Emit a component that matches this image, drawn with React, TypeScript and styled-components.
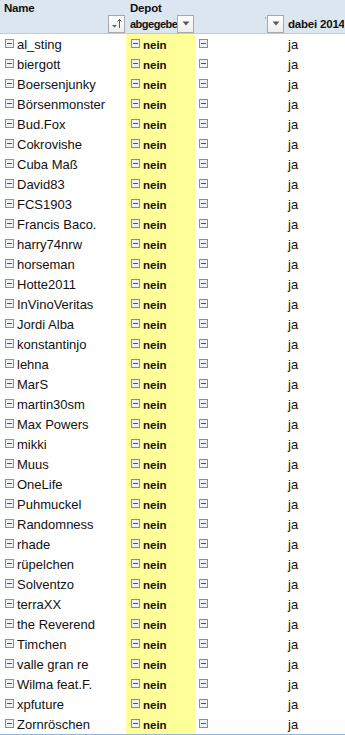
import React, { FC } from "react";
import styled, { createGlobalStyle } from "styled-components";

const names = [
  "al_sting",
  "biergott",
  "Boersenjunky",
  "Börsenmonster",
  "Bud.Fox",
  "Cokrovishe",
  "Cuba Maß",
  "David83",
  "FCS1903",
  "Francis Baco.",
  "harry74nrw",
  "horseman",
  "Hotte2011",
  "InVinoVeritas",
  "Jordi Alba",
  "konstantinjo",
  "lehna",
  "MarS",
  "martin30sm",
  "Max Powers",
  "mikki",
  "Muus",
  "OneLife",
  "Puhmuckel",
  "Randomness",
  "rhade",
  "rüpelchen",
  "Solventzo",
  "terraXX",
  "the Reverend",
  "Timchen",
  "valle gran re",
  "Wilma feat.F.",
  "xpfuture",
  "Zornröschen"
];

const colors = {
  header: "#dce6f1",
  headerLine: "#b8cce4",
  bottomLine: "#95b3d7",
  yellow: "#ffff99",
  text: "#111111",
  boxBorder: "#7f8ea3"
};

const GlobalStyle = createGlobalStyle`
  html, body {
    margin: 0;
    padding: 0;
    background: #ffffff;
    font-family: "Liberation Sans", Arial, sans-serif;
    font-size: 13px;
    color: ${colors.text};
  }
`;

const Sheet = styled.div`
  width: 345px;
  height: 735px;
  overflow: hidden;
`;

const HeaderRow = styled.div`
  display: grid;
  grid-template-columns: 126px 69px 90px 1fr;
  height: 33px;
  background: ${colors.header};
  border-bottom: 1px solid ${colors.headerLine};
  font-weight: bold;
  font-size: 11.5px;
  letter-spacing: -0.2px;
`;

const HeaderCell = styled.div<{ $padLeft?: number }>`
  display: grid;
  grid-template-rows: 15px 18px;
  padding-left: ${(p) => p.$padLeft ?? 4}px;
  padding-right: 1px;
  overflow: hidden;
  white-space: nowrap;
`;

const HeaderTitle = styled.div`
  line-height: 17px;
`;

const HeaderSub = styled.div`
  display: flex;
  align-items: center;
  justify-content: space-between;
  line-height: 16px;
  overflow: hidden;
`;

const SubText = styled.span<{ $tight?: boolean }>`
  flex: 1 1 auto;
  min-width: 0;
  overflow: hidden;
  font-size: ${(p) => (p.$tight ? "11px" : "inherit")};
  letter-spacing: ${(p) => (p.$tight ? "-0.5px" : "inherit")};
`;

const FilterButton = styled.div`
  flex: 0 0 auto;
  width: 15px;
  height: 16px;
  margin-top: -1px;
  border: 1px solid #a9a9a9;
  background: linear-gradient(#ffffff, #eeeeee);
  display: flex;
  align-items: center;
  justify-content: center;
`;

const Tick = styled.span`
  align-self: flex-start;
  margin-top: 2px;
  width: 1px;
  height: 2px;
  background: #c9a86b;
  margin-right: 1px;
`;

const Body = styled.div`
  border-bottom: 1px solid ${colors.bottomLine};
`;

const Row = styled.div`
  display: grid;
  grid-template-columns: 126px 69px 90px 1fr;
  height: 20px;
`;

const Cell = styled.div<{ $fill?: string; $padLeft?: number; $bold?: boolean }>`
  display: flex;
  align-items: center;
  gap: 2px;
  padding-left: ${(p) => p.$padLeft ?? 5}px;
  background: ${(p) => p.$fill ?? "transparent"};
  font-weight: ${(p) => (p.$bold ? "bold" : "normal")};
  font-size: ${(p) => (p.$bold ? "11.5px" : "13px")};
  white-space: nowrap;
  overflow: hidden;
`;

const Label = styled.span`
  line-height: 20px;
  padding-top: 1px;
`;

const MinusBox: FC = () => (
  <svg width="10" height="10" viewBox="0 0 10 10" style={{ flex: "0 0 auto" }}>
    <rect x="0.5" y="0.5" width="8" height="8" fill="#eef1f6" stroke={colors.boxBorder} />
    <line x1="2" y1="4.5" x2="7" y2="4.5" stroke="#4a5566" strokeWidth="1" />
  </svg>
);

const DropArrow: FC = () => (
  <svg width="8" height="5" viewBox="0 0 8 5">
    <polygon points="0.5,0.5 7.5,0.5 4,4.5" fill="#5a5a5a" />
  </svg>
);

const SortArrow: FC = () => (
  <svg width="11" height="11" viewBox="0 0 11 11">
    <polygon points="1,7 6,7 3.5,9.5" fill="#5a5a5a" />
    <line x1="8.5" y1="1.5" x2="8.5" y2="10" stroke="#5a5a5a" strokeWidth="1" />
    <polyline points="6.5,3.5 8.5,1.5 10.5,3.5" fill="none" stroke="#5a5a5a" strokeWidth="1" />
  </svg>
);

const App: FC = () => (
  <Sheet>
    <GlobalStyle />
    <HeaderRow>
      <HeaderCell>
        <HeaderTitle>Name</HeaderTitle>
        <HeaderSub>
          <SubText />
          <FilterButton>
            <SortArrow />
          </FilterButton>
        </HeaderSub>
      </HeaderCell>
      <HeaderCell>
        <HeaderTitle>Depot</HeaderTitle>
        <HeaderSub>
          <SubText $tight>abgegeben</SubText>
          <FilterButton>
            <DropArrow />
          </FilterButton>
        </HeaderSub>
      </HeaderCell>
      <HeaderCell>
        <HeaderTitle />
        <HeaderSub>
          <SubText />
          <Tick />
          <FilterButton>
            <DropArrow />
          </FilterButton>
        </HeaderSub>
      </HeaderCell>
      <HeaderCell $padLeft={3}>
        <HeaderTitle />
        <HeaderSub>
          <SubText>dabei 2014</SubText>
        </HeaderSub>
      </HeaderCell>
    </HeaderRow>
    <Body>
      {names.map((name) => (
        <Row key={name}>
          <Cell>
            <MinusBox />
            <Label>{name}</Label>
          </Cell>
          <Cell $fill={colors.yellow} $bold>
            <MinusBox />
            <Label>nein</Label>
          </Cell>
          <Cell $padLeft={4}>
            <MinusBox />
          </Cell>
          <Cell $padLeft={3}>
            <Label>ja</Label>
          </Cell>
        </Row>
      ))}
    </Body>
  </Sheet>
);

export default App;
